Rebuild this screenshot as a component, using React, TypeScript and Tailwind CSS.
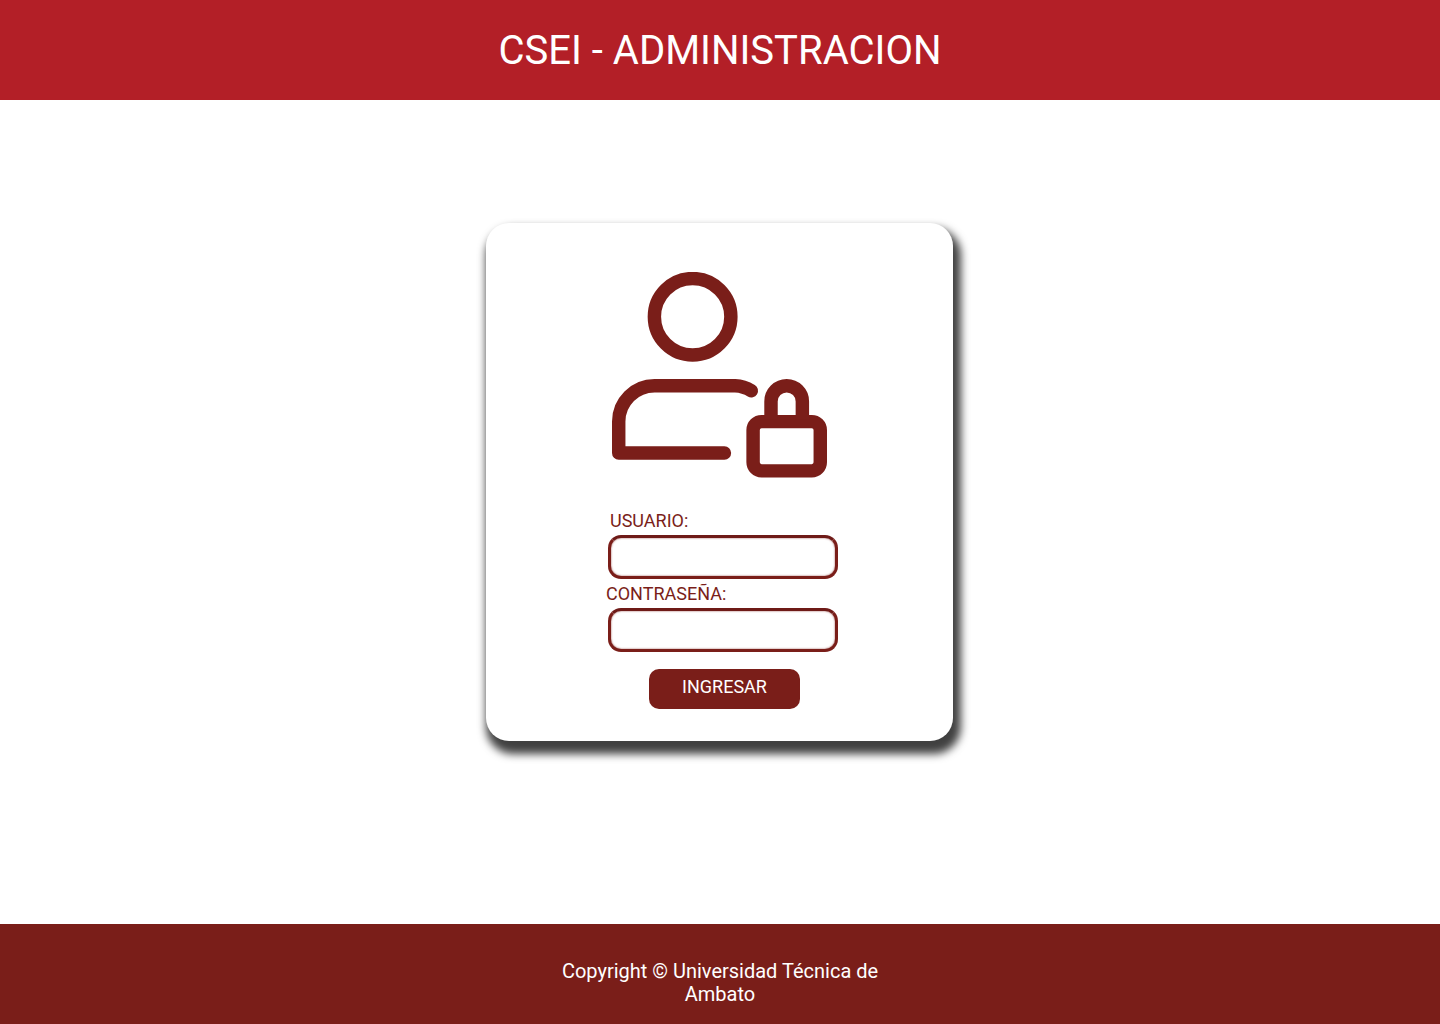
import { useState } from "react";
import type { FormEvent } from "react";

function UserLockIcon() {
  return (
    <svg
      viewBox="0 0 24 23"
      className="w-[215px] self-center text-[#7a1e19]"
      fill="none"
      stroke="currentColor"
      strokeWidth="1.5"
      strokeLinecap="round"
      strokeLinejoin="round"
      aria-hidden="true"
    >
      <circle cx="9" cy="5" r="4.27" />
      <path d="M12.55 20.2H.75v-3.5a4 4 0 0 1 4-4h9a3.8 3.8 0 0 1 1.8.55" />
      <rect x="15.75" y="16.7" width="7.5" height="5.5" rx="0.95" />
      <path d="M17.75 16.5v-2.05a1.75 1.75 0 0 1 3.5 0v2.05" strokeLinecap="butt" />
    </svg>
  );
}

const fieldClass =
  "ml-0.5 h-11 w-[230px] rounded-[13px] border-[3px] border-[#7a1e19] border-t-[#6e1a17] bg-white px-3 text-lg text-[#7a1e19] shadow-[inset_0_0_2px_rgba(122,30,25,0.8)] outline-none";

export default function App() {
  const [user, setUser] = useState("");
  const [password, setPassword] = useState("");
  const submit = (e: FormEvent) => e.preventDefault();

  return (
    <div className="flex min-h-screen flex-col bg-white font-['Roboto',sans-serif]">
      <header className="flex min-h-[100px] items-center justify-center bg-[#b31f27] px-4 pt-0.5">
        <h1 className="text-center text-[40px] leading-[48px] text-white">CSEI - ADMINISTRACION</h1>
      </header>

      <main className="flex grow flex-col items-center pt-[123px] pr-[17px] pb-12 pl-4">
        <section className="flex w-full max-w-[467px] flex-col rounded-[23px] bg-white pt-[49px] pb-8 shadow-[4px_9px_9px_4px_rgba(0,0,0,0.75)]">
          <UserLockIcon />
          <form
            onSubmit={submit}
            className="mt-8 ml-[5px] flex w-[232px] flex-col gap-1 self-center text-lg leading-[21px] text-[#7a1e19]"
          >
            <label htmlFor="usuario" className="pl-1 leading-[21px]">
              USUARIO:
            </label>
            <input
              id="usuario"
              type="text"
              autoComplete="username"
              value={user}
              onChange={(e) => setUser(e.target.value)}
              className={fieldClass}
            />
            <label htmlFor="contrasena" className="leading-[21px]">
              CONTRASEÑA:
            </label>
            <input
              id="contrasena"
              type="password"
              autoComplete="current-password"
              value={password}
              onChange={(e) => setPassword(e.target.value)}
              className={fieldClass}
            />
            <button
              type="submit"
              className="mt-[13px] ml-[5px] h-10 w-[151px] self-center rounded-[10px] bg-[#7a1e19] pb-1.5 text-lg leading-[21px] text-white"
            >
              INGRESAR
            </button>
          </form>
        </section>
      </main>

      <footer className="flex min-h-[100px] justify-center bg-[#7a1e19] px-4 pt-9 pb-4">
        <p className="max-w-[340px] text-center text-xl leading-[23px] text-white">
          Copyright © Universidad Técnica de Ambato
        </p>
      </footer>
    </div>
  );
}
